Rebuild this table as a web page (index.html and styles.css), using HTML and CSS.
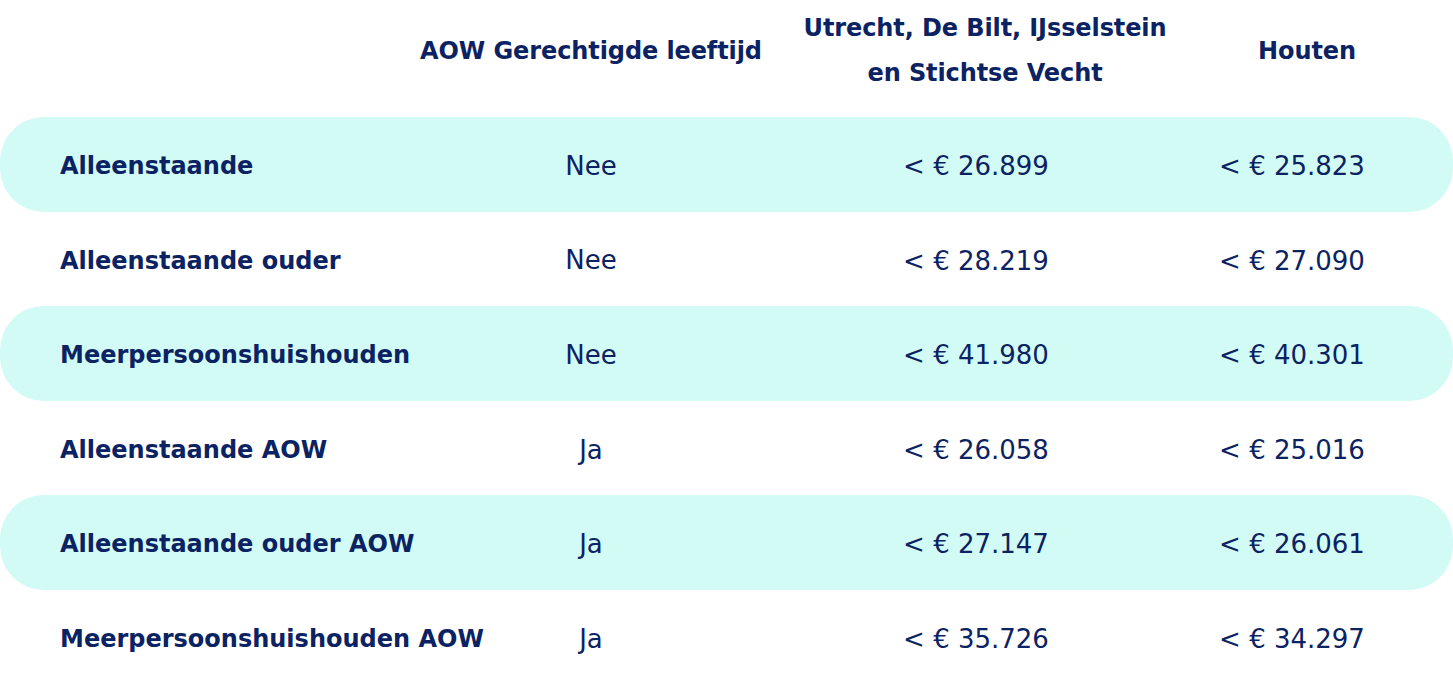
FILE: index.html
```html
<!DOCTYPE html>
<html lang="nl">
<head>
<meta charset="utf-8">
<title>Inkomensgrenzen</title>
<link rel="stylesheet" href="styles.css">
</head>
<body>
<div class="table">
  <div class="row head">
    <div class="cell label"></div>
    <div class="cell c2">AOW Gerechtigde leeftijd</div>
    <div class="cell c3">Utrecht, De Bilt, IJsselstein<br>en Stichtse Vecht</div>
    <div class="cell c4">Houten</div>
  </div>
  <div class="row hl">
    <div class="cell label">Alleenstaande</div>
    <div class="cell c2">Nee</div>
    <div class="cell c3">&lt; € 26.899</div>
    <div class="cell c4">&lt; € 25.823</div>
  </div>
  <div class="row">
    <div class="cell label">Alleenstaande ouder</div>
    <div class="cell c2 up">Nee</div>
    <div class="cell c3">&lt; € 28.219</div>
    <div class="cell c4">&lt; € 27.090</div>
  </div>
  <div class="row hl">
    <div class="cell label">Meerpersoonshuishouden</div>
    <div class="cell c2">Nee</div>
    <div class="cell c3">&lt; € 41.980</div>
    <div class="cell c4">&lt; € 40.301</div>
  </div>
  <div class="row">
    <div class="cell label">Alleenstaande AOW</div>
    <div class="cell c2">Ja</div>
    <div class="cell c3">&lt; € 26.058</div>
    <div class="cell c4">&lt; € 25.016</div>
  </div>
  <div class="row hl">
    <div class="cell label">Alleenstaande ouder AOW</div>
    <div class="cell c2">Ja</div>
    <div class="cell c3">&lt; € 27.147</div>
    <div class="cell c4">&lt; € 26.061</div>
  </div>
  <div class="row">
    <div class="cell label">Meerpersoonshuishouden AOW</div>
    <div class="cell c2">Ja</div>
    <div class="cell c3">&lt; € 35.726</div>
    <div class="cell c4">&lt; € 34.297</div>
  </div>
</div>
</body>
</html>
```
FILE: styles.css
```css
html, body {
  margin: 0;
  padding: 0;
  background: #ffffff;
}

body {
  width: 1453px;
  height: 684px;
  overflow: hidden;
  color: #0b2263;
  font-family: "DejaVu Sans", "Liberation Sans", sans-serif;
}

.table {
  display: flex;
  flex-direction: column;
}

.row {
  display: grid;
  grid-template-columns: 430px 322px 448px 184px 1fr;
  align-items: center;
  height: 94.5px;
  box-sizing: border-box;
  padding-top: 4px;
  font-size: 26px;
  font-weight: 400;
}

.row.hl {
  background: #d3fbf6;
  border-radius: 44px;
}

.cell {
  text-align: center;
  white-space: nowrap;
  justify-self: center;
}

.cell.label {
  justify-self: start;
  text-align: left;
  padding-left: 60px;
  font-weight: 700;
  font-size: 24px;
}

.cell.up {
  position: relative;
  top: -1px;
}

.row.head {
  height: 117px;
  padding-top: 0;
  padding-bottom: 15px;
  font-weight: 700;
  font-size: 24px;
  line-height: 45px;
  letter-spacing: -0.1px;
}

.row.head .c3 {
  padding-left: 18px;
}

.row.head .c4 {
  padding-left: 30px;
}
```
